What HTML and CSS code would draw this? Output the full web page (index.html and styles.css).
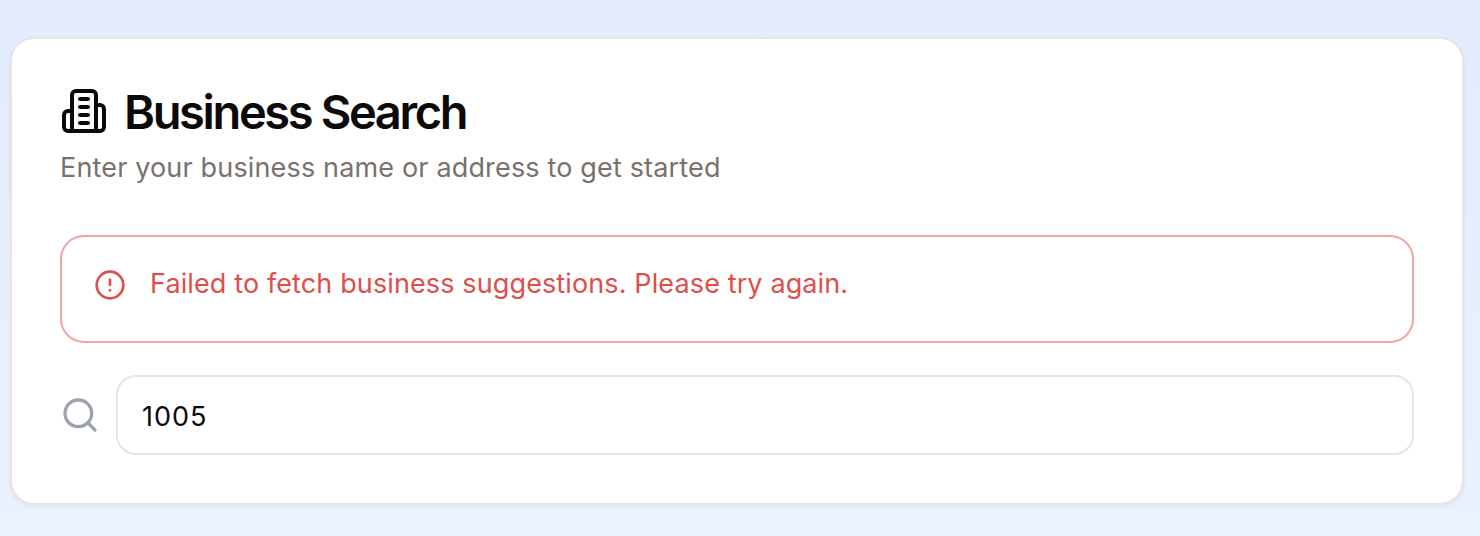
FILE: index.html
```html
<!DOCTYPE html>
<html lang="en">
<head>
<meta charset="utf-8">
<title>Business Search</title>
<link rel="stylesheet" href="styles.css">
</head>
<body>
<main class="card">
  <header class="card-header">
    <h1 class="title">
      <svg class="icon title-icon" viewBox="0 0 24 24"><path d="M6 22V4a2 2 0 0 1 2-2h8a2 2 0 0 1 2 2v18Z"/><path d="M6 12H4a2 2 0 0 0-2 2v6a2 2 0 0 0 2 2h2"/><path d="M18 9h2a2 2 0 0 1 2 2v9a2 2 0 0 1-2 2h-2"/><path d="M10 6h4"/><path d="M10 10h4"/><path d="M10 14h4"/><path d="M10 18h4"/></svg>
      <span class="title-text">Business Search</span>
    </h1>
    <p class="description">Enter your business name or address to get started</p>
  </header>
  <div class="alert" role="alert">
    <svg class="icon alert-icon" viewBox="0 0 24 24"><circle cx="12" cy="12" r="10"/><path d="M12 8v4"/><path d="M12 16h.01"/></svg>
    <span class="alert-text">Failed to fetch business suggestions. Please try again.</span>
  </div>
  <div class="search-row">
    <svg class="icon search-icon" viewBox="0 0 24 24"><circle cx="11" cy="11" r="8"/><path d="m21 21-4.3-4.3"/></svg>
    <input class="search-input" type="text" value="1005" aria-label="Business name or address">
  </div>
</main>
</body>
</html>
```
FILE: styles.css
```css
* { box-sizing: border-box; }
body {
  margin: 0;
  height: 536px;
  padding: 37px 16px 31px 10px;
  overflow: hidden;
  font-family: Inter, "Liberation Sans", sans-serif;
  font-size: 27px;
  line-height: 40px;
  background: linear-gradient(#e2ecfd, #ebf1fd);
}
.card {
  height: 468px;
  padding: 48px;
  border: 2px solid #e7e5e4;
  border-radius: 24px;
  background: #fff;
  box-shadow: 0 2px 4px rgba(0, 0, 0, 0.05);
}
.icon {
  flex: none;
  fill: none;
  stroke: currentColor;
  stroke-width: 2;
  stroke-linecap: round;
  stroke-linejoin: round;
}
.card-header {
  display: flex;
  flex-direction: column;
  gap: 12px;
  margin-bottom: 48px;
}
.title {
  display: flex;
  align-items: center;
  gap: 16px;
  height: 48px;
  margin: 0;
  font-size: 47px;
  font-weight: 600;
  line-height: 48px;
  letter-spacing: -2.35px;
  color: #0c0a09;
}
.title-icon { width: 48px; height: 48px; }
.title-text { padding-top: 1px; }
.description {
  height: 40px;
  margin: 0;
  padding-top: 1px;
  letter-spacing: 0.16px;
  color: #78716c;
}
.alert {
  display: flex;
  gap: 24px;
  height: 108px;
  padding: 32px;
  margin-bottom: 32px;
  border: 2px solid #efa6a4;
  border-radius: 24px;
  letter-spacing: 0.12px;
  color: #dc4f4b;
}
.alert-icon { width: 32px; height: 32px; }
.alert-text { margin-top: -5px; }
.search-row {
  display: flex;
  align-items: center;
  gap: 16px;
}
.search-icon { width: 40px; height: 40px; color: #9ca3af; }
.search-input {
  flex: 1;
  min-width: 0;
  height: 80px;
  padding: 10px 24px 7px;
  border: 2px solid #e5e5e5;
  border-radius: 20px;
  outline: none;
  background: transparent;
  font: inherit;
  letter-spacing: 0.95px;
  color: #0c0a09;
}
```
